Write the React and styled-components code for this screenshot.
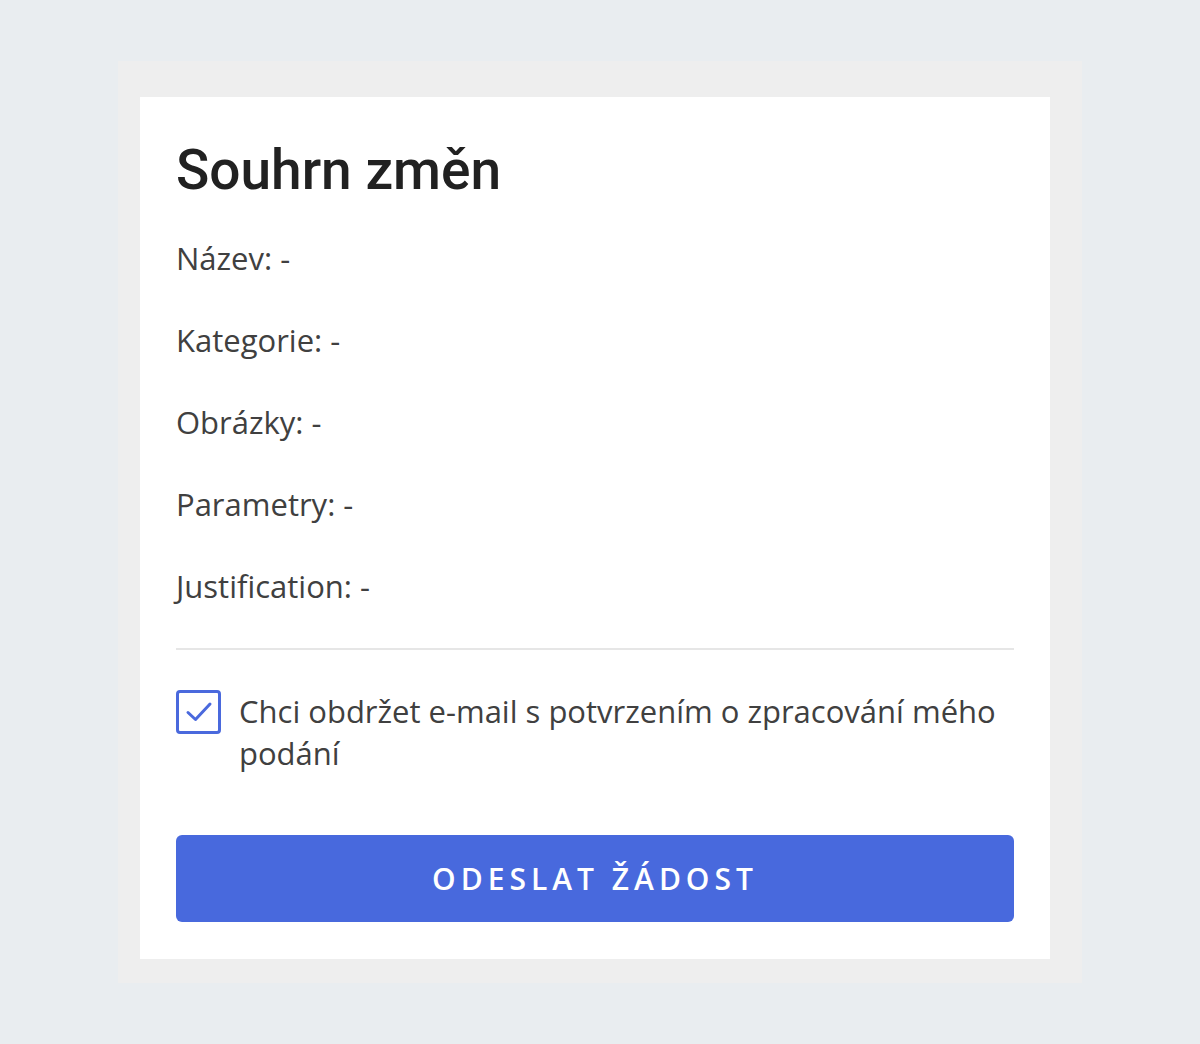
import React, { useState } from 'react'
import styled, { createGlobalStyle } from 'styled-components'

const GlobalStyle = createGlobalStyle`
  * { box-sizing: border-box; }
  html, body {
    margin: 0;
    padding: 0;
    background: #e9edf0;
    font-family: 'Open Sans', 'Liberation Sans', sans-serif;
  }
`

const Page = styled.div`
  min-height: 100vh;
  display: flex;
  align-items: center;
  justify-content: center;
`

const Panel = styled.div`
  width: 964px;
  background: #eeeeee;
  padding: 36px 32px 24px 22px;
`

const Card = styled.section`
  background: #ffffff;
  padding: 41px 36px 37px;
`

const Title = styled.h2`
  margin: 0 0 36px;
  font-family: Roboto, 'Liberation Sans', sans-serif;
  font-weight: 500;
  font-size: 55px;
  line-height: 64px;
  color: #212121;
`

const Rows = styled.div`
  display: flex;
  flex-direction: column;
  gap: 42px;
`

const Row = styled.div`
  font-size: 31px;
  line-height: 40px;
  color: #404040;
`

const Divider = styled.hr`
  border: 0;
  height: 2px;
  background: #e6e6e6;
  margin: 42px 0 40px;
`

const CheckRow = styled.label`
  display: flex;
  align-items: flex-start;
  gap: 18px;
  cursor: pointer;
`

const Box = styled.span`
  flex: 0 0 auto;
  width: 45px;
  height: 44px;
  border: 3px solid #4a69dd;
  border-radius: 4px;
  display: flex;
  align-items: center;
  justify-content: center;
  background: #fff;
`

const CheckText = styled.span`
  font-size: 31px;
  line-height: 42px;
  color: #404040;
`

const SubmitButton = styled.button`
  display: block;
  width: 100%;
  height: 87px;
  margin-top: 61px;
  border: 0;
  border-radius: 6px;
  background: #4869dd;
  color: #ffffff;
  font-family: 'Open Sans', 'Liberation Sans', sans-serif;
  font-weight: 600;
  font-size: 30px;
  letter-spacing: 5px;
  text-transform: uppercase;
  cursor: pointer;
`

const fields = ['Název', 'Kategorie', 'Obrázky', 'Parametry', 'Justification']

export default function App() {
  const [checked, setChecked] = useState(true)
  return (
    <Page>
      <GlobalStyle />
      <Panel>
        <Card>
          <Title>Souhrn změn</Title>
          <Rows>
            {fields.map((f) => (
              <Row key={f}>{f}: -</Row>
            ))}
          </Rows>
          <Divider />
          <CheckRow onClick={() => setChecked(!checked)}>
            <Box>
              {checked && (
                <svg width="30" height="24" viewBox="0 0 30 24" fill="none">
                  <path d="M4 12.5l7.5 7L26 4" stroke="#4a69dd" strokeWidth="3" strokeLinecap="round" strokeLinejoin="round" />
                </svg>
              )}
            </Box>
            <CheckText>Chci obdržet e-mail s potvrzením o zpracování mého podání</CheckText>
          </CheckRow>
          <SubmitButton>Odeslat žádost</SubmitButton>
        </Card>
      </Panel>
    </Page>
  )
}
